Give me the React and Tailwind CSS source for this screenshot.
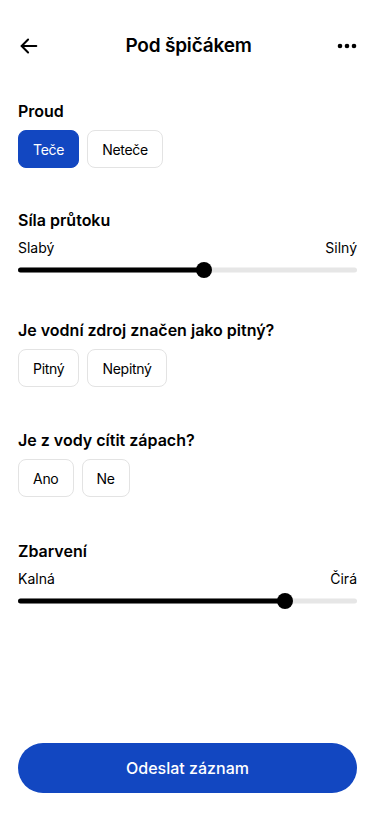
import { useState } from "react";

const BLUE = "bg-[#1247c1]";

function Choice({ options, value, onChange }) {
  return (
    <div className="mt-[7px] flex gap-2">
      {options.map((o) => (
        <button
          key={o}
          onClick={() => onChange(o)}
          className={
            value === o
              ? "h-[38px] rounded-lg border border-[#1247c1] bg-[#1247c1] px-[14px] text-[14px] tracking-[-0.02em] text-white"
              : "h-[38px] rounded-lg border border-[#e3e3e3] bg-white px-[14px] text-[14px] tracking-[-0.02em] text-black"
          }
        >
          {o}
        </button>
      ))}
    </div>
  );
}

function Range({ left, right, value }) {
  return (
    <div>
      <div className="mt-[6px] flex justify-between text-[14px] leading-5 text-black">
        <span>{left}</span>
        <span>{right}</span>
      </div>
      <div className="relative mt-1 h-4">
        <div className="absolute top-1/2 right-0 left-0 h-[5px] -translate-y-1/2 rounded-full bg-[#e6e6e6]" />
        <div
          className="absolute top-1/2 left-0 h-[5px] -translate-y-1/2 rounded-full bg-black"
          style={{ width: `${value}%` }}
        />
        <div
          className="absolute top-0 h-4 w-4 -translate-x-1/2 rounded-full bg-black"
          style={{ left: `${value}%` }}
        />
      </div>
    </div>
  );
}

function Label({ children }) {
  return <p className="text-[16px] leading-6 font-semibold text-black">{children}</p>;
}

export default function App() {
  const [proud, setProud] = useState("Teče");
  const [pitny, setPitny] = useState(null);
  const [zapach, setZapach] = useState(null);

  return (
    <div className="flex min-h-[813px] flex-col bg-white px-[18px] font-['Inter',sans-serif] text-black">
      {/* Header */}
      <div className="mt-[30px] flex h-8 items-center justify-between">
        <svg width="22" height="22" viewBox="0 0 24 24" fill="none" stroke="black" strokeWidth="2.2" strokeLinecap="round" strokeLinejoin="round">
          <path d="M20 12H4" />
          <path d="M11 5l-7 7 7 7" />
        </svg>
        <h1 className="text-[19px] font-semibold tracking-[-0.01em]">Pod špičákem</h1>
        <svg width="20" height="6" viewBox="0 0 20 6" fill="black">
          <circle cx="3" cy="3" r="2.3" />
          <circle cx="10" cy="3" r="2.3" />
          <circle cx="17" cy="3" r="2.3" />
        </svg>
      </div>

      <div className="mt-[37px]">
        <Label>Proud</Label>
        <Choice options={["Teče", "Neteče"]} value={proud} onChange={setProud} />
      </div>

      <div className="mt-10">
        <Label>Síla průtoku</Label>
        <Range left="Slabý" right="Silný" value={55} />
      </div>

      <div className="mt-10">
        <Label>Je vodní zdroj značen jako pitný?</Label>
        <Choice options={["Pitný", "Nepitný"]} value={pitny} onChange={setPitny} />
      </div>

      <div className="mt-[41px]">
        <Label>Je z vody cítit zápach?</Label>
        <Choice options={["Ano", "Ne"]} value={zapach} onChange={setZapach} />
      </div>

      <div className="mt-[42px]">
        <Label>Zbarvení</Label>
        <Range left="Kalná" right="Čirá" value={78.7} />
      </div>

      <button className={`mt-auto mb-5 h-[50px] w-full rounded-full ${BLUE} text-[16px] font-medium text-white`}>
        Odeslat záznam
      </button>
    </div>
  );
}
